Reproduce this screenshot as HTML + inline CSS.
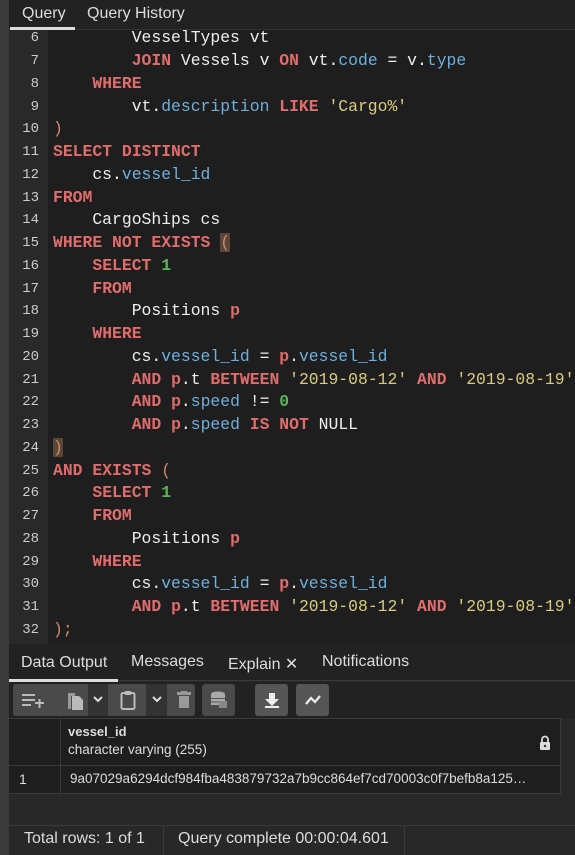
<!DOCTYPE html>
<html><head><meta charset="utf-8"><style>
*{margin:0;padding:0;box-sizing:border-box}
body{width:575px;height:855px;background:#222;overflow:hidden;position:relative;font-family:"Liberation Sans",sans-serif;color:#ddd}
.strip{position:absolute;left:0;top:0;width:9px;height:855px;background:#3a3a3a}
.tabs{position:absolute;left:9px;top:0;width:566px;height:30px;background:#222;border-bottom:1px solid #333}
.tab{position:absolute;top:5px;font-size:16px;color:#ddd}
.ul{position:absolute;height:3px;background:#ddd}
.ed{position:absolute;left:9px;top:30px;width:566px;height:614px;background:#1e1e1e;overflow:hidden}
.gut{position:absolute;left:0;top:0;width:39px;height:614px;background:#292929}
.ln{position:absolute;left:0;width:30px;text-align:right;font:14px "Liberation Mono",monospace;color:#ccc}
.cl{position:absolute;left:44px;white-space:pre;font:16.4px "Liberation Mono",monospace;color:#eee}
.k{color:#e06c6c;font-weight:bold}.p{color:#6eb0dc}.s{color:#d8cc80}.n{color:#58b858;font-weight:bold}.o{color:#d08770}
.pb{background:#5a4636}
.bt{position:absolute;left:9px;top:645px;width:566px;height:210px;background:#282828}
.tb{position:absolute;height:32px;background:#4a4a4a;border-radius:3px}
.st{position:absolute;font-size:16px;color:#ddd}
</style></head><body>
<div class="strip"></div>
<div class="tabs">
<div class="tab" style="left:13px">Query</div>
<div class="tab" style="left:78px">Query History</div>
<div class="ul" style="left:1px;top:27px;width:65px"></div>
</div>
<div class="ed">
<div class="gut"></div>
<div id="code"></div>
</div>
<script>
var L=[
[6,'        VesselTypes vt'],
[7,'        <span class="k">JOIN</span> Vessels v <span class="k">ON</span> vt.<span class="p">code</span> = v.<span class="p">type</span>'],
[8,'    <span class="k">WHERE</span>'],
[9,'        vt.<span class="p">description</span> <span class="k">LIKE</span> <span class="s">\'Cargo%\'</span>'],
[10,'<span class="o">)</span>'],
[11,'<span class="k">SELECT DISTINCT</span>'],
[12,'    cs.<span class="p">vessel_id</span>'],
[13,'<span class="k">FROM</span>'],
[14,'    CargoShips cs'],
[15,'<span class="k">WHERE NOT EXISTS</span> <span class="o pb">(</span>'],
[16,'    <span class="k">SELECT</span> <span class="n">1</span>'],
[17,'    <span class="k">FROM</span>'],
[18,'        Positions <span class="k">p</span>'],
[19,'    <span class="k">WHERE</span>'],
[20,'        cs.<span class="p">vessel_id</span> = <span class="k">p</span>.<span class="p">vessel_id</span>'],
[21,'        <span class="k">AND</span> <span class="k">p</span>.t <span class="k">BETWEEN</span> <span class="s">\'2019-08-12\'</span> <span class="k">AND</span> <span class="s">\'2019-08-19\'</span>'],
[22,'        <span class="k">AND</span> <span class="k">p</span>.<span class="p">speed</span> != <span class="n">0</span>'],
[23,'        <span class="k">AND</span> <span class="k">p</span>.<span class="p">speed</span> <span class="k">IS NOT</span> NULL'],
[24,'<span class="o pb">)</span>'],
[25,'<span class="k">AND EXISTS</span> <span class="o">(</span>'],
[26,'    <span class="k">SELECT</span> <span class="n">1</span>'],
[27,'    <span class="k">FROM</span>'],
[28,'        Positions <span class="k">p</span>'],
[29,'    <span class="k">WHERE</span>'],
[30,'        cs.<span class="p">vessel_id</span> = <span class="k">p</span>.<span class="p">vessel_id</span>'],
[31,'        <span class="k">AND</span> <span class="k">p</span>.t <span class="k">BETWEEN</span> <span class="s">\'2019-08-12\'</span> <span class="k">AND</span> <span class="s">\'2019-08-19\'</span>'],
[32,'<span class="o">);</span>']];
var h='';
L.forEach(function(a){var c=62+(a[0]-7)*22.76-30;
h+='<div class="ln" style="top:'+(c-9)+'px">'+a[0]+'</div><div class="cl" style="top:'+(c-11)+'px">'+a[1]+'</div>';});
document.getElementById('code').innerHTML=h;
</script>
<div class="bt">
<div style="position:absolute;left:0;top:0;width:566px;height:36px;background:#222;border-bottom:1px solid #3a3a3a"></div>
<div style="position:absolute;left:0;top:37px;width:566px;height:36px;background:#222"></div>
<div class="st" style="left:12px;top:9px">Data Output</div>
<div class="st" style="left:122px;top:8px">Messages</div>
<div class="st" style="left:219px;top:9px">Explain ✕</div>
<div class="st" style="left:313px;top:8px">Notifications</div>
<div class="ul" style="left:0;top:34px;width:109px"></div>
<div style="position:absolute;left:4px;top:39px;width:182px;height:32px;background:#4a4a4a;border-radius:3px"></div>
<div style="position:absolute;left:79px;top:39px;width:20px;height:32px;background:#333"></div>
<div style="position:absolute;left:137px;top:39px;width:21px;height:32px;background:#333"></div>
<svg style="position:absolute;left:12px;top:47px" width="24" height="16"><path d="M1 3h13M1 8h13M1 13h9M14 11h9M18.5 7v9" stroke="#bbb" stroke-width="2"/></svg>
<svg style="position:absolute;left:56px;top:46px" width="20" height="20"><path d="M3 2h7v3H6v13H3z" fill="#999"/><path d="M7 5h7l4 4v10H7z" fill="#bbb"/></svg>
<svg style="position:absolute;left:84px;top:50px" width="10" height="8"><path d="M1 2l4 4 4-4" stroke="#ddd" stroke-width="2" fill="none"/></svg>
<svg style="position:absolute;left:111px;top:45px" width="16" height="20"><rect x="1.5" y="3" width="13" height="16" rx="1.5" stroke="#bbb" stroke-width="2" fill="none"/><rect x="5" y="1" width="6" height="4" fill="#bbb"/></svg>
<svg style="position:absolute;left:143px;top:50px" width="10" height="8"><path d="M1 2l4 4 4-4" stroke="#ddd" stroke-width="2" fill="none"/></svg>
<svg style="position:absolute;left:168px;top:46px" width="14" height="18"><rect x="0" y="1" width="14" height="3" fill="#999"/><rect x="4" y="0" width="6" height="2" fill="#999"/><path d="M2 5h10v12H2z" fill="#999"/></svg>
<div class="tb" style="left:193px;width:33px;top:39px"></div>
<svg style="position:absolute;left:201px;top:46px" width="18" height="18"><ellipse cx="8" cy="3" rx="7" ry="2.5" fill="#aaa"/><rect x="1" y="4" width="14" height="10" fill="#aaa"/><path d="M1 7.5h14M1 11h14" stroke="#555"/><rect x="9" y="10" width="8" height="7" fill="#888"/></svg>
<div class="tb" style="left:246px;width:33px;top:39px;background:#555"></div>
<svg style="position:absolute;left:254px;top:46px" width="18" height="18"><path d="M6 2h6v6h4l-7 7-7-7h4z" fill="#eee"/><rect x="2" y="15" width="14" height="2" fill="#eee"/></svg>
<div class="tb" style="left:287px;width:33px;top:39px;background:#555"></div>
<svg style="position:absolute;left:295px;top:48px" width="18" height="14"><path d="M2 11l5-6 4 4 5-6" stroke="#eee" stroke-width="2.2" fill="none"/></svg>
<div style="position:absolute;left:0;top:73px;width:552px;height:76px;background:#1e1e1e;border:1px solid #3a3a3a;border-left:none"></div>
<div style="position:absolute;left:51px;top:74px;width:1px;height:74px;background:#3a3a3a"></div>
<div style="position:absolute;left:0;top:120px;width:552px;height:1px;background:#3a3a3a"></div>
<div style="position:absolute;left:59px;top:79px;font-size:13px;font-weight:bold;color:#ddd">vessel_id</div>
<div style="position:absolute;left:59px;top:97px;font-size:13.5px;color:#ddd">character varying (255)</div>
<svg style="position:absolute;left:530px;top:90px" width="12" height="15"><path d="M3 7V4.5a3 3 0 0 1 6 0V7" stroke="#ddd" stroke-width="1.8" fill="none"/><rect x="1" y="7" width="10" height="8" rx="1" fill="#ddd"/><circle cx="6" cy="11" r="1.2" fill="#333"/></svg>
<div style="position:absolute;left:10px;top:126px;font-size:14px">1</div>
<div style="position:absolute;left:61px;top:126px;font-size:13.5px;color:#ddd">9a07029a6294dcf984fba483879732a7b9cc864ef7cd70003c0f7befb8a125…</div>
<div style="position:absolute;left:0;top:180px;width:566px;height:30px;border-top:1px solid #3a3a3a"></div>
<div style="position:absolute;left:154px;top:180px;width:1px;height:30px;background:#3a3a3a"></div>
<div style="position:absolute;left:395px;top:180px;width:1px;height:30px;background:#3a3a3a"></div>
<div class="st" style="left:15px;top:185px">Total rows: 1 of 1</div>
<div class="st" style="left:169px;top:185px">Query complete 00:00:04.601</div>
</div>
</body></html>
